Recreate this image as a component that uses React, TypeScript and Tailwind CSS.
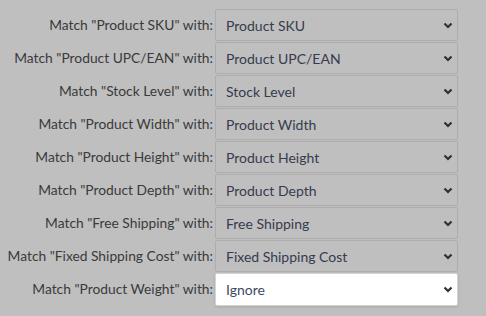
const rows: [string, string][] = [
  ["Product SKU", "Product SKU"],
  ["Product UPC/EAN", "Product UPC/EAN"],
  ["Stock Level", "Stock Level"],
  ["Product Width", "Product Width"],
  ["Product Height", "Product Height"],
  ["Product Depth", "Product Depth"],
  ["Free Shipping", "Free Shipping"],
  ["Fixed Shipping Cost", "Fixed Shipping Cost"],
  ["Product Weight", "Ignore"],
];

function Chevron() {
  return (
    <svg width="10" height="7" viewBox="0 0 10 7" className="shrink-0">
      <path d="M1.5 1.5 L5 5 L8.5 1.5" fill="none" stroke="currentColor" strokeWidth="2.2" />
    </svg>
  );
}

export default function App() {
  return (
    <div
      className="w-[486px] h-[316px] bg-[#bfbfbf] pt-[9px] flex flex-col gap-[1px]"
      style={{ fontFamily: "Lato, 'Open Sans', sans-serif" }}
    >
      {rows.map(([label, value], i) => {
        const active = i === rows.length - 1;
        return (
          <div key={label} className="flex items-center h-[32px]">
            <div className="w-[215px] pr-[2px] text-right text-[13.8px] text-[#3a3a3a] whitespace-nowrap">
              Match "{label}" with:
            </div>
            <div
              className={
                active
                  ? "w-[243px] h-[33px] flex items-center justify-between pl-[10px] pr-[4px] bg-white border border-[#d4d4d4] rounded-[2px] shadow-sm text-[14px] text-[#3b4a5e]"
                  : "w-[243px] h-[32px] flex items-center justify-between pl-[10px] pr-[4px] bg-[#bfbfbf] border border-[#adadad] rounded-[2px] text-[14px] text-[#363b4e]"
              }
            >
              <span>{value}</span>
              <span className="text-[#2f2f3a]">
                <Chevron />
              </span>
            </div>
          </div>
        );
      })}
    </div>
  );
}
